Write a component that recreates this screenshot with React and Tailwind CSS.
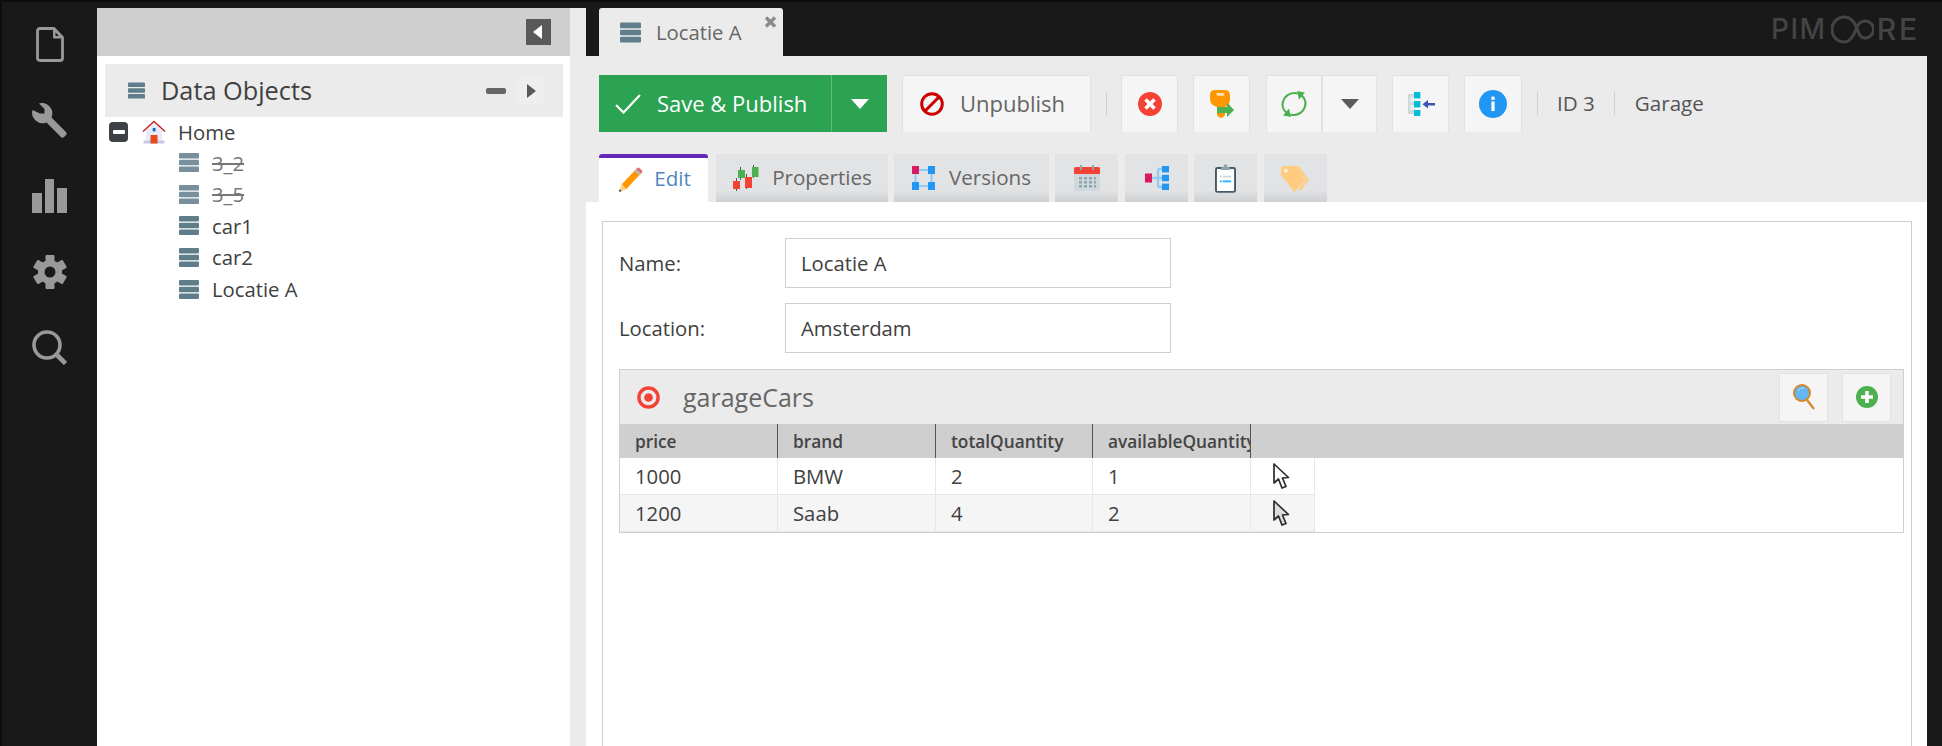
import React from "react";

const Bars = ({ className }) => (
  <svg viewBox="0 0 20 20" className={className}>
    <rect x="0" y="0.5" width="20" height="5.4" rx="1" fill="#607d8b" />
    <rect x="0" y="7.3" width="20" height="5.4" rx="1" fill="#607d8b" />
    <rect x="0" y="14.1" width="20" height="5.4" rx="1" fill="#607d8b" />
  </svg>
);

const Tri = ({ className, fill }) => (
  <svg viewBox="0 0 18 10" className={className}><path d="M0 0H18L9 10Z" fill={fill} /></svg>
);

const Cursor = ({ fill }) => (
  <svg viewBox="0 0 17 26" className="w-[17px] h-[26px]">
    <path d="M1 1V20L5.5 16L9 25L13 23.500L9.500 15L15.500 14.500Z" fill={fill} stroke="#2c2c2c" strokeWidth="1.7" strokeLinejoin="round" />
  </svg>
);

const TreeRow = ({ label, off }) => (
  <div className="h-[31.6px] flex items-center pl-[74px]">
    <Bars className={off ? "w-[20px] h-[21px] opacity-85" : "w-[20px] h-[21px]"} />
    <span className={off ? "ml-[13px] line-through text-[#777]" : "ml-[13px] text-[#404040]"}>{label}</span>
  </div>
);

const Btn = ({ w, ml, children }) => (
  <div className={`${w} ${ml} h-[57px] bg-[#f5f5f5] border border-b-0 border-[#e2e2e2] flex items-center justify-center shrink-0`}>{children}</div>
);

const Sep = ({ ml }) => <div className={`${ml} w-px h-[23px] bg-[#cfcfcf] shrink-0`} />;

const Tab = ({ w, ml, children }) => (
  <div className={`${w} ${ml} h-[48px] bg-gradient-to-b from-[#e2e3e5] from-[75%] to-[#cfd0d1] flex items-center justify-center text-[#666] shrink-0`}>{children}</div>
);

const cols = ["w-[158px]", "w-[158px]", "w-[157px]", "w-[158px]"];

const DataRow = ({ cells, bg, fill }) => (
  <div className="flex h-[37px]">
    <div className={`flex ${bg} border-b border-[#e8e8e8]`}>
      {cells.map((c, i) => (
        <div key={i} className={`${cols[i]} h-full pl-[15px] flex items-center border-r border-[#e8e8e8] text-[#404040]`}>{c}</div>
      ))}
      <div className="w-[64px] h-full border-r border-[#e8e8e8] flex items-center pl-[22px]"><Cursor fill={fill} /></div>
    </div>
  </div>
);

const gearTeeth = [0, 60, 120];

export default function App() {
  return (
    <div className="w-[1942px] h-[746px] overflow-hidden flex flex-col bg-[#191919] font-['Open_Sans',sans-serif] text-[20.3px]">
      <div className="h-[2px] bg-[#0e0e0e] shrink-0" />
      <div className="flex flex-1 min-h-0">
        {/* sidebar */}
        <div className="w-[97px] shrink-0 border-l-2 border-[#0e0e0e] flex flex-col items-center pt-[25px]">
          <div className="h-[76px] w-[35px] flex justify-center items-start">
            <svg viewBox="0 0 28 35" className="w-[28px] h-[35px]" fill="none" stroke="#999" strokeWidth="2.8" strokeLinejoin="round">
              <path d="M4 1.500H18L26.500 10.500V31Q26.500 33.500 24 33.500H4Q1.500 33.500 1.500 31V4Q1.500 1.500 4 1.500Z" />
              <path d="M17.500 2V11H26" fill="#999" stroke="#999" strokeWidth="1" />
              <path d="M19.500 5.500V9H23Z" fill="#191919" stroke="none" />
            </svg>
          </div>
          <div className="h-[76px] flex items-start">
            <svg viewBox="0 0 35 35" className="w-[35px] h-[35px]">
              <path d="M7 0.400L12.500 6V10.500H8L0.500 7A10.500 10.500 0 0 0 14.500 19.500L29.500 34.600Q31 35 32 34L34.500 31.500Q35 30 34 29L19.500 14.500A10.500 10.500 0 0 0 7 0.400Z" fill="#999" />
            </svg>
          </div>
          <div className="h-[76px] w-[35px] flex items-start">
            <div className="w-full h-[34px] flex items-end justify-between">
              <div className="w-[10px] h-[20px] bg-[#999]" />
              <div className="w-[9px] h-[34px] bg-[#999]" />
              <div className="w-[10px] h-[25px] bg-[#999]" />
            </div>
          </div>
          <div className="h-[75px] flex items-start">
            <svg viewBox="0 0 34 34" className="w-[34px] h-[34px]">
              {gearTeeth.map((a) => (
                <rect key={a} x="12.500" y="0" width="9" height="34" rx="1" fill="#999" transform={`rotate(${a} 17 17)`} />
              ))}
              <circle cx="17" cy="17" r="12" fill="#999" />
              <circle cx="17" cy="17" r="5.500" fill="#191919" />
            </svg>
          </div>
          <svg viewBox="0 0 35 35" className="w-[35px] h-[35px]" fill="none" stroke="#999">
            <circle cx="15" cy="15" r="13" strokeWidth="3.600" />
            <path d="M24.500 24.500L33.500 33.500" strokeWidth="4.600" />
          </svg>
        </div>

        {/* tree */}
        <div className="w-[473px] shrink-0 flex flex-col pt-[6px]">
          <div className="h-[48px] bg-[#cfcfcf] flex items-center justify-end pr-[19px] shrink-0">
            <div className="w-[25px] h-[26px] bg-[#59595b] flex items-center justify-center">
              <svg viewBox="0 0 9 14" className="w-[9px] h-[14px] mr-[2px]"><path d="M9 0V14L0 7Z" fill="#fff" /></svg>
            </div>
          </div>
          <div className="flex-1 bg-white pt-[8px] pl-[8px] pr-[7px]">
            <div className="h-[53px] bg-[#ebebeb] flex items-center pl-[23px] pr-[18px]">
              <Bars className="w-[17px] h-[19px]" />
              <span className="ml-[16px] text-[25.300px] text-[#404040] leading-none">Data Objects</span>
              <div className="ml-auto w-[20px] h-[6px] rounded-[2px] bg-[#666]" />
              <div className="ml-[11px] w-[28px] h-[28px] bg-[#eeeeee] flex items-center justify-center">
                <svg viewBox="0 0 9 14" className="w-[9px] h-[14px]"><path d="M0 0V14L9 7Z" fill="#59595b" /></svg>
              </div>
            </div>
            <div>
              <div className="h-[30px] flex items-center pl-[4px]">
                <div className="w-[19px] h-[20px] rounded-[4px] bg-[#3d4044] flex items-center justify-center">
                  <div className="w-[12px] h-[4px] rounded-[1px] bg-white" />
                </div>
                <svg viewBox="0 0 24 24" className="w-[24px] h-[24px] ml-[14px]">
                  <path d="M4 10.500L12 3.500L20 10.500V23H4Z" fill="#e8eaf6" />
                  <rect x="1.500" y="20.500" width="21" height="3" fill="#c5cae9" />
                  <path d="M1 11.500L12 1.500L23 11.500" fill="none" stroke="#c62828" strokeWidth="1.600" />
                  <rect x="10.700" y="8" width="2.800" height="3.400" fill="#1565c0" />
                  <rect x="8.500" y="15" width="7" height="8.500" fill="#e64a19" />
                </svg>
                <span className="ml-[12px] text-[#404040]">Home</span>
              </div>
              <TreeRow label="3_2" off />
              <TreeRow label="3_5" off />
              <TreeRow label="car1" />
              <TreeRow label="car2" />
              <TreeRow label="Locatie A" />
            </div>
          </div>
        </div>

        <div className="w-[16px] shrink-0 mt-[6px] bg-[#ebebeb]" />

        {/* main */}
        <div className="w-[1341px] shrink-0 flex flex-col">
          <div className="h-[54px] shrink-0 flex items-end pl-[13px] relative">
            <div className="w-[184px] h-[48px] bg-[#ebebeb] rounded-t-[3px] relative flex items-center pl-[21px]">
              <Bars className="w-[21px] h-[23px]" />
              <span className="ml-[15px] text-[#666]">Locatie A</span>
              <svg viewBox="0 0 12 12" className="absolute right-[6px] top-[8px] w-[13px] h-[12px]"><path d="M1.500 1.500L10.500 10.500M10.500 1.500L1.500 10.500" stroke="#8a8a8a" strokeWidth="3.400" /></svg>
            </div>
            <div className="absolute left-[1185px] top-[11px] w-[155px] h-[32px] flex items-center text-[#444] font-['Inter',sans-serif] font-medium text-[28px] leading-none tracking-[1.500px]" aria-label="PIMCORE">
              <span>PIM</span>
              <svg viewBox="0 0 48 32" className="w-[43px] h-[29px] ml-[4px] shrink-0" fill="none" stroke="#444" strokeWidth="3.400">
                <path d="M15 2C24 2 28 10 31 20C32.500 24 35 25.500 38 25.500A9.500 9.500 0 0 0 38 6.500C34 6.500 31 9 29 13C26 22 22 30 15 30A14 14 0 0 1 15 2Z" />
              </svg>
              <span className="ml-[3px] text-[30px] tracking-[3px]">RE</span>
            </div>
          </div>

          <div className="h-[146px] shrink-0 bg-[#ebebeb] pl-[13px] pt-[19px]">
            <div className="flex items-center h-[57px]">
              <div className="w-[288px] h-[57px] bg-[#2ca352] flex text-white shrink-0">
                <div className="w-[233px] border-r border-[#5cba7b] flex items-center pl-[16px]">
                  <svg viewBox="0 0 26 20" className="w-[26px] h-[20px]" fill="none" stroke="#fff" strokeWidth="2.200"><path d="M1 11L8.500 18.500L25 1" /></svg>
                  <span className="ml-[16px] mb-[2px] text-[22px] leading-none">Save &amp; Publish</span>
                </div>
                <div className="flex-1 flex items-center justify-center"><Tri className="w-[18px] h-[10px]" fill="#fff" /></div>
              </div>
              <Btn w="w-[189px]" ml="ml-[15px]">
                <div className="w-full flex items-center pl-[17px]">
                  <svg viewBox="0 0 24 24" className="w-[24px] h-[24px]" fill="none" stroke="#cc0000" strokeWidth="3"><circle cx="12" cy="12" r="10.300" /><path d="M5 19L19 5" /></svg>
                  <span className="ml-[16px] mb-[2px] text-[22px] text-[#666] leading-none">Unpublish</span>
                </div>
              </Btn>
              <Sep ml="ml-[15px]" />
              <Btn w="w-[57px]" ml="ml-[14px]">
                <svg viewBox="0 0 24 24" className="w-[24px] h-[24px]"><circle cx="12" cy="12" r="12" fill="#f44336" /><path d="M7.500 7.500L16.500 16.500M16.500 7.500L7.500 16.500" stroke="#fff" strokeWidth="3.600" /></svg>
              </Btn>
              <Btn w="w-[57px]" ml="ml-[15px]">
                <svg viewBox="0 0 24 28" className="w-[24px] h-[28px]">
                  <path d="M5 0H15Q20 0 20 5V9Q20 15 15 17V25Q13 28 11 28T7 25V17Q0 15 0 9V5Q0 0 5 0Z" fill="#ff9800" />
                  <rect x="6.500" y="3" width="8" height="2.800" rx="1.400" fill="#ffe0b2" />
                  <path d="M7 17H17V12.500L24 20L17 27V23H7Z" fill="#4caf50" />
                </svg>
              </Btn>
              <Btn w="w-[56px]" ml="ml-[16px]">
                <svg viewBox="0 0 26 26" className="w-[26px] h-[26px]" fill="none" stroke="#4caf50" strokeWidth="2.200">
                  <path d="M6 22C2 19 0.800 14 2.200 10C3.600 5.500 8 2 13 2C14.500 2 15.500 2.200 16.500 2.600" />
                  <path d="M20 4C24 7 25.200 12 23.800 16C22.400 20.500 18 24 13 24C11.500 24 10.500 23.800 9.500 23.400" />
                  <path d="M16 0L24 1.500L18 8.500Z" fill="#4caf50" stroke="none" />
                  <path d="M10 26L2 24.500L8 17.500Z" fill="#4caf50" stroke="none" />
                </svg>
              </Btn>
              <Btn w="w-[55px]" ml="ml-0"><Tri className="w-[18px] h-[10px]" fill="#5a5a5a" /></Btn>
              <Btn w="w-[57px]" ml="ml-[15px]">
                <svg viewBox="0 0 28 24" className="w-[28px] h-[24px]">
                  <path d="M1 2H8V22H1Z" fill="#cfd8dc" />
                  <path d="M3.500 5H8V10H3.500ZM3.500 13H8V18H3.500Z" fill="#eceff1" />
                  <rect x="7" y="0" width="6.400" height="6.400" fill="#00bcd4" />
                  <rect x="7" y="9" width="6.400" height="6.400" fill="#00bcd4" />
                  <rect x="7" y="18" width="6.400" height="6.400" fill="#00bcd4" />
                  <path d="M15.500 12.200L21 8V11H28V13.400H21V16.400Z" fill="#3f51b5" />
                </svg>
              </Btn>
              <Btn w="w-[58px]" ml="ml-[15px]">
                <svg viewBox="0 0 28 28" className="w-[28px] h-[28px]">
                  <circle cx="14" cy="14" r="14" fill="#2196f3" />
                  <rect x="12.400" y="11.500" width="3.200" height="9.500" fill="#fff" />
                  <rect x="12.400" y="6.600" width="3.200" height="3.200" fill="#fff" />
                </svg>
              </Btn>
              <Sep ml="ml-[15px]" />
              <span className="ml-[19px] text-[#555] text-[20.600px] shrink-0">ID 3</span>
              <Sep ml="ml-[19px]" />
              <span className="ml-[20px] text-[#555] text-[20.600px] shrink-0">Garage</span>
            </div>

            <div className="flex mt-[22px]">
              <div className="w-[109px] h-[48px] bg-white border-t-[4px] border-[#6428b4] rounded-t-[3px] flex items-center justify-center shrink-0">
                <svg viewBox="0 0 28 28" className="w-[27px] h-[27px]">
                  <path d="M6 18L20 3L25 7.500L10.500 23Z" fill="#ff9800" />
                  <path d="M20 3L22 1Q23 0 24.500 1L27 3.500Q28 5 27 6L25 7.500Z" fill="#e57373" />
                  <path d="M19 4L21 2.500L26 7L24.500 8.500Z" fill="#b0bec5" />
                  <path d="M6 18L10.500 23L3 26Z" fill="#ffcc80" />
                  <path d="M4 23L6 25L3 26Z" fill="#37474f" />
                </svg>
                <span className="ml-[11px] mb-[3px] text-[#4f86bd] text-[20.600px]">Edit</span>
              </div>
              <Tab w="w-[172px]" ml="ml-[8px]">
                <svg viewBox="0 0 28 26" className="w-[28px] h-[26px]">
                  <path d="M4.500 13V26M14.500 9V24M8.500 2V15M21.500 0V13M5.500 0" stroke="#555" strokeWidth="1" fill="none" />
                  <rect x="1" y="16" width="7" height="8" fill="#f44336" />
                  <rect x="6" y="5" width="7" height="8" fill="#4caf50" />
                  <rect x="13" y="12" width="7" height="11" fill="#f44336" />
                  <rect x="20" y="2" width="6.500" height="10" fill="#4caf50" />
                </svg>
                <span className="ml-[12px] mb-[2px] text-[20.600px]">Properties</span>
              </Tab>
              <Tab w="w-[155px]" ml="ml-[6px]">
                <svg viewBox="0 0 23 24" className="w-[23px] h-[24px]">
                  <path d="M3.500 4H19.500V20H3.500Z" fill="none" stroke="#90caf9" strokeWidth="2" />
                  <rect x="0" y="0" width="7" height="8" fill="#d81b60" />
                  <rect x="16" y="0" width="7" height="8" fill="#2196f3" />
                  <rect x="0" y="16" width="7" height="8" fill="#2196f3" />
                  <rect x="16" y="16" width="7" height="8" fill="#2196f3" />
                </svg>
                <span className="ml-[14px] mb-[2px] text-[20.600px]">Versions</span>
              </Tab>
              <Tab w="w-[63px]" ml="ml-[6px]">
                <svg viewBox="0 0 26 26" className="w-[26px] h-[26px]">
                  <rect x="0" y="2" width="26" height="24" rx="2" fill="#cfd8dc" />
                  <path d="M0 9V4Q0 2 2 2H24Q26 2 26 4V9Z" fill="#f44336" />
                  <rect x="6" y="0" width="2" height="5" fill="#90a4ae" />
                  <rect x="18" y="0" width="2" height="5" fill="#90a4ae" />
                  <path d="M5 12h3v2.500h-3zM10 12h3v2.500h-3zM15 12h3v2.500h-3zM20 12h2v2.500h-2zM5 16h3v2.500h-3zM10 16h3v2.500h-3zM15 16h3v2.500h-3zM20 16h2v2.500h-2zM5 20h3v2.500h-3zM10 20h3v2.500h-3zM15 20h3v2.500h-3zM20 20h2v2.500h-2z" fill="#90a4ae" />
                </svg>
              </Tab>
              <Tab w="w-[63px]" ml="ml-[7px]">
                <svg viewBox="0 0 24 24" className="w-[24px] h-[24px]">
                  <path d="M7 12H13M13 3H17M13 12H17M13 21H17M13 3V21" fill="none" stroke="#90caf9" strokeWidth="2.400" />
                  <rect x="0" y="7.500" width="7" height="9" fill="#d81b60" />
                  <rect x="17" y="0" width="7" height="6.400" fill="#2196f3" />
                  <rect x="17" y="8.800" width="7" height="6.400" fill="#2196f3" />
                  <rect x="17" y="17.600" width="7" height="6.400" fill="#2196f3" />
                </svg>
              </Tab>
              <Tab w="w-[63px]" ml="ml-[6px]">
                <svg viewBox="0 0 22 30" className="w-[21px] h-[29px]">
                  <rect x="1" y="4" width="20" height="25" rx="1.500" fill="#fff" stroke="#455a64" strokeWidth="2" />
                  <path d="M6 5Q6 3 8 3H9Q9 0 11 0T13 3H14Q16 3 16 5V6H6Z" fill="#90a4ae" />
                  <rect x="5" y="12" width="2" height="2" fill="#cfd8dc" />
                  <rect x="8" y="12" width="9" height="2" fill="#cfd8dc" />
                  <rect x="5" y="17" width="2" height="2" fill="#29b6f6" />
                  <rect x="8" y="17" width="9" height="2" fill="#29b6f6" />
                </svg>
              </Tab>
              <Tab w="w-[63px]" ml="ml-[7px]">
                <svg viewBox="0 0 30 28" className="w-[29px] h-[27px]">
                  <path d="M13 1L18 1L29 15L20 27L18 25L26 15Z" fill="#ffcc80" />
                  <path d="M2 1H14L25 15L15 27Q14 28 13 27L1 12Q0 11 0 10V3Q0 1 2 1Z" fill="#ffcc80" />
                  <circle cx="5" cy="6" r="2" fill="#fff3e0" />
                </svg>
              </Tab>
            </div>
          </div>

          {/* content */}
          <div className="flex-1 min-h-0 bg-white pt-[19px] pl-[16px] pr-[15px]">
            <div className="h-full border border-b-0 border-[#cfcfcf] pt-[16px] pl-[16px] pr-[7px] text-[#404040]">
              <div className="flex items-center">
                <span className="w-[166px] shrink-0">Name:</span>
                <div className="w-[386px] h-[50px] border border-[#cfcfcf] pl-[15px] flex items-center">Locatie A</div>
              </div>
              <div className="flex items-center mt-[15px]">
                <span className="w-[166px] shrink-0">Location:</span>
                <div className="w-[386px] h-[50px] border border-[#cfcfcf] pl-[15px] flex items-center">Amsterdam</div>
              </div>

              <div className="mt-[16px] border border-[#cfcfcf]">
                <div className="h-[54px] bg-[#ebebeb] flex items-center pl-[17px] pr-[12px]">
                  <svg viewBox="0 0 24 24" className="w-[23px] h-[23px]" fill="none">
                    <circle cx="12" cy="12" r="10" stroke="#f44336" strokeWidth="3.600" />
                    <circle cx="12" cy="12" r="4.500" fill="#f44336" />
                  </svg>
                  <span className="ml-[23px] text-[25px] text-[#666] leading-none">garageCars</span>
                  <div className="ml-auto w-[49px] h-[49px] bg-[#f5f5f5] border border-[#e2e2e2] flex items-center justify-center">
                    <svg viewBox="0 0 22 30" className="w-[22px] h-[30px]" fill="none">
                      <circle cx="9" cy="11" r="8" fill="#64b5f6" stroke="#d4862a" strokeWidth="2" />
                      <path d="M14 18L21 27" stroke="#d4862a" strokeWidth="2.200" />
                      <path d="M5 9Q7 5.500 11 6" stroke="#bbdefb" strokeWidth="1" />
                    </svg>
                  </div>
                  <div className="ml-[14px] w-[49px] h-[49px] bg-[#f5f5f5] border border-[#e2e2e2] flex items-center justify-center">
                    <svg viewBox="0 0 22 22" className="w-[22px] h-[22px]">
                      <circle cx="11" cy="11" r="11" fill="#4caf50" />
                      <path d="M11 5V17M5 11H17" stroke="#fff" strokeWidth="3.600" />
                    </svg>
                  </div>
                </div>
                <div className="h-[34px] bg-[#cfcfcf] flex font-semibold text-[17.300px] text-[#444]">
                  {["price", "brand", "totalQuantity", "availableQuantity"].map((h, i) => (
                    <div key={h} className={`${cols[i]} pl-[15px] pt-[1px] flex items-center border-r border-[#555] overflow-hidden whitespace-nowrap`}>{h}</div>
                  ))}
                </div>
                <DataRow cells={["1000", "BMW", "2", "1"]} bg="bg-white" fill="#ffffff" />
                <DataRow cells={["1200", "Saab", "4", "2"]} bg="bg-[#f5f5f5]" fill="#dedede" />
              </div>
            </div>
          </div>
        </div>

        <div className="flex-1" />
      </div>
    </div>
  );
}
